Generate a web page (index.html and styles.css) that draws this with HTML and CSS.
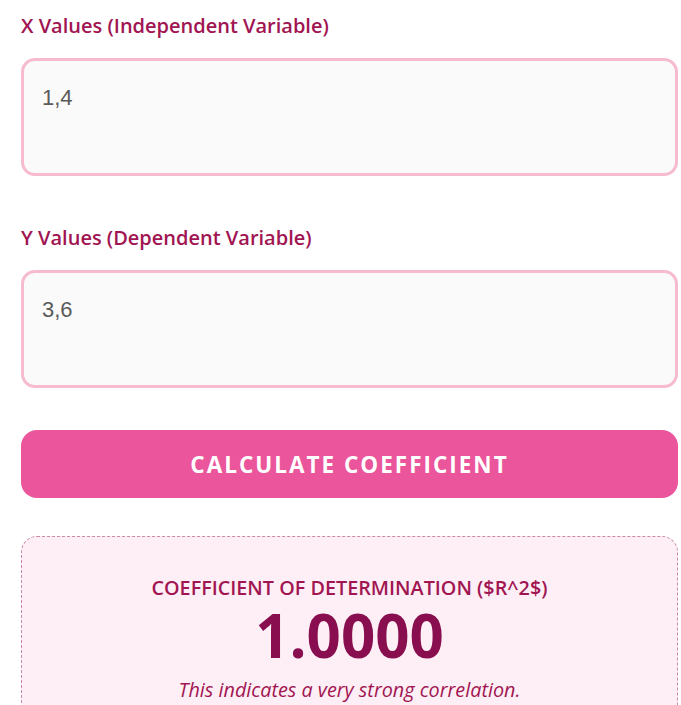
FILE: index.html
```html
<!DOCTYPE html>
<html lang="en">
<head>
<meta charset="utf-8">
<title>Coefficient of Determination Calculator</title>
<link rel="stylesheet" href="styles.css">
</head>
<body>
<main class="calc">
  <div class="field">
    <label class="field-label" for="x-values">X Values (Independent Variable)</label>
    <textarea class="field-input" id="x-values">1,4</textarea>
  </div>
  <div class="field">
    <label class="field-label" for="y-values">Y Values (Dependent Variable)</label>
    <textarea class="field-input" id="y-values">3,6</textarea>
  </div>
  <button class="calc-button" type="button">Calculate Coefficient</button>
  <section class="result">
    <h2 class="result-title">Coefficient of Determination ($R^2$)</h2>
    <div class="result-value">1.0000</div>
    <p class="result-note">This indicates a very strong correlation.</p>
  </section>
</main>
</body>
</html>
```
FILE: styles.css
```css
html, body {
  margin: 0;
  background: #ffffff;
}

body {
  font-family: "Open Sans", "Noto Sans", sans-serif;
}

.calc {
  padding: 14px 3px 0 21px;
  display: flex;
  flex-direction: column;
}

.field {
  display: flex;
  flex-direction: column;
  gap: 20px;
  margin-bottom: 50px;
}

.field + .field {
  margin-bottom: 42px;
}

.field-label {
  font-size: 20px;
  line-height: 24px;
  font-weight: 600;
  color: #a11552;
}

.field-input {
  display: block;
  box-sizing: border-box;
  width: 100%;
  height: 118px;
  margin: 0;
  padding: 20px 18px;
  border: 3px solid #f6bbcf;
  border-radius: 14px;
  background: #fafafa;
  font-family: "Liberation Sans", Arial, sans-serif;
  font-size: 22px;
  line-height: 33px;
  color: #5a5a5a;
  resize: none;
  outline: none;
}

.calc-button {
  height: 68px;
  margin: 0 0 38px;
  border: none;
  border-radius: 16px;
  background: #ea559b;
  color: #ffffff;
  font-family: "Open Sans", "Noto Sans", sans-serif;
  font-size: 22.5px;
  font-weight: 700;
  letter-spacing: 2px;
  text-transform: uppercase;
  cursor: pointer;
}

.result {
  border: 1px dashed #c98aa8;
  border-radius: 16px;
  background: #fdeff5;
  padding: 39px 20px 30px;
  text-align: center;
}

.result-title {
  margin: 0;
  font-size: 19.8px;
  line-height: 24px;
  font-weight: 600;
  text-transform: uppercase;
  color: #a11552;
}

.result-value {
  font-size: 60px;
  line-height: 70px;
  font-weight: 700;
  color: #880e4f;
}

.result-note {
  margin: 7px 0 0;
  font-size: 19.8px;
  line-height: 26px;
  font-style: italic;
  color: #a11552;
}
```
